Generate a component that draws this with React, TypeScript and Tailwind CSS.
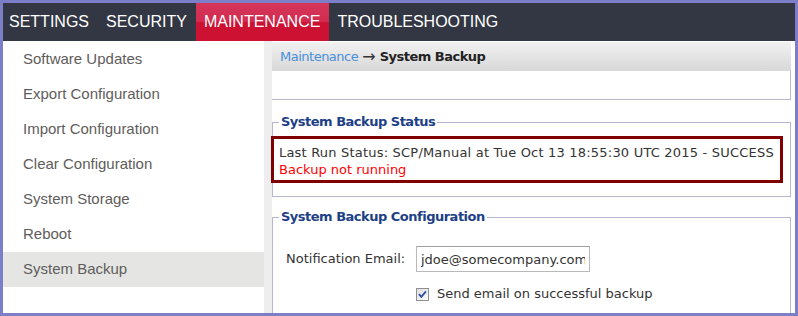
import React from "react";

// ─── Data ────────────────────────────────────────────────────────────────────

const TABS = ["SETTINGS", "SECURITY", "MAINTENANCE", "TROUBLESHOOTING"];
const ACTIVE_TAB = "MAINTENANCE";

const MENU = [
  "Software Updates",
  "Export Configuration",
  "Import Configuration",
  "Clear Configuration",
  "System Storage",
  "Reboot",
  "System Backup",
];
const ACTIVE_ITEM = "System Backup";

// ─── Checkbox ────────────────────────────────────────────────────────────────

function CheckBox() {
  return (
    <svg width="13" height="13" viewBox="0 0 13 13" className="shrink-0">
      <defs>
        <linearGradient id="cbg" x1="0" y1="0" x2="1" y2="1">
          <stop offset="0" stopColor="#dcdcdc" />
          <stop offset="1" stopColor="#ffffff" />
        </linearGradient>
      </defs>
      <rect x="0.5" y="0.5" width="12" height="12" fill="url(#cbg)" stroke="#8e8f8f" />
      <path d="M3 6.2 L5.3 8.8 L10 3.4" fill="none" stroke="#2d4ea3" strokeWidth="1.8" />
    </svg>
  );
}

// ─── App ─────────────────────────────────────────────────────────────────────

export default function App() {
  return (
    <div className="w-[798px] h-[316px] border-[3px] border-[#7c7fc7] bg-white overflow-hidden flex flex-col">
      {/* Top nav */}
      <nav className="h-[38px] shrink-0 flex bg-[#333743] text-white text-[16px] font-['Liberation_Sans',Arial,sans-serif]">
        {TABS.map((tab, i) => (
          <div
            key={tab}
            className={`flex items-center pr-[9px] ${i === 0 ? "pl-[6px]" : "pl-[8px]"} ${
              tab === ACTIVE_TAB
                ? "bg-[linear-gradient(to_bottom,#d4365a_0%,#d22c50_48%,#cc1133_52%,#cc1133_100%)]"
                : ""
            }`}
          >
            {tab}
          </div>
        ))}
      </nav>

      <div className="flex flex-1 min-h-0">
        {/* Sidebar */}
        <aside className="w-[261px] shrink-0 pt-[1px] bg-white font-['Liberation_Sans',Arial,sans-serif] text-[15px] text-[#5f5d5b]">
          {MENU.map((item) => (
            <div
              key={item}
              className={`h-[35px] flex items-center pl-[20px] ${
                item === ACTIVE_ITEM ? "bg-[#e5e6e4]" : ""
              }`}
            >
              {item}
            </div>
          ))}
        </aside>

        <div className="w-[8px] shrink-0 bg-[#eeeeee]" />

        {/* Content */}
        <main className="w-[519px] shrink-0 pt-[1px] font-['DejaVu_Sans',Verdana,sans-serif] text-[13px] text-[#333333]">
          <div className="h-[29px] flex items-center pl-[8px] bg-[linear-gradient(to_bottom,#f1f1f1,#d8d8d8)] tracking-[-0.5px]">
            <span className="text-[#4a8fda]">Maintenance</span>
            <span className="mx-[4px] text-[16px] leading-none tracking-normal text-[#333]">→</span>
            <span className="font-bold text-[#222]">System Backup</span>
          </div>

          <div className="h-[29px] border-r border-b border-[#b7b7cf]" />

          {/* Status */}
          <fieldset className="mt-[13px] border border-[#b7b7cf] pb-[13px]">
            <legend className="ml-[6px] px-[2px] leading-[18px] font-bold tracking-[-0.5px] text-[#203f86]">
              System Backup Status
            </legend>
            <div className="mt-[5px] -ml-[2px] w-[512px] h-[47px] border-[3px] border-[#800000] pt-[5px] pl-[5px] leading-[17px] whitespace-nowrap">
              <div className="tracking-[0.2px]">
                Last Run Status: SCP/Manual at Tue Oct 13 18:55:30 UTC 2015 - SUCCESS
              </div>
              <div className="text-[#ff0000]">Backup not running</div>
            </div>
          </fieldset>

          {/* Configuration */}
          <fieldset className="mt-[11px] border border-[#b7b7cf] pb-[20px]">
            <legend className="ml-[6px] px-[2px] leading-[18px] font-bold tracking-[-0.5px] text-[#203f86]">
              System Backup Configuration
            </legend>
            <div className="mt-[20px] flex items-center pl-[13px]">
              <label className="w-[130px] shrink-0">Notification Email:</label>
              <input
                type="text"
                readOnly
                value="jdoe@somecompany.com"
                className="w-[174px] h-[26px] border border-[#b9b9b9] border-t-[#a0a0a0] px-[4px] text-[13px] text-[#333] outline-none bg-white"
              />
            </div>
            <div className="mt-[15px] flex items-center gap-[8px] pl-[143px] h-[14px]">
              <CheckBox />
              <span>Send email on successful backup</span>
            </div>
          </fieldset>
        </main>
      </div>
    </div>
  );
}
